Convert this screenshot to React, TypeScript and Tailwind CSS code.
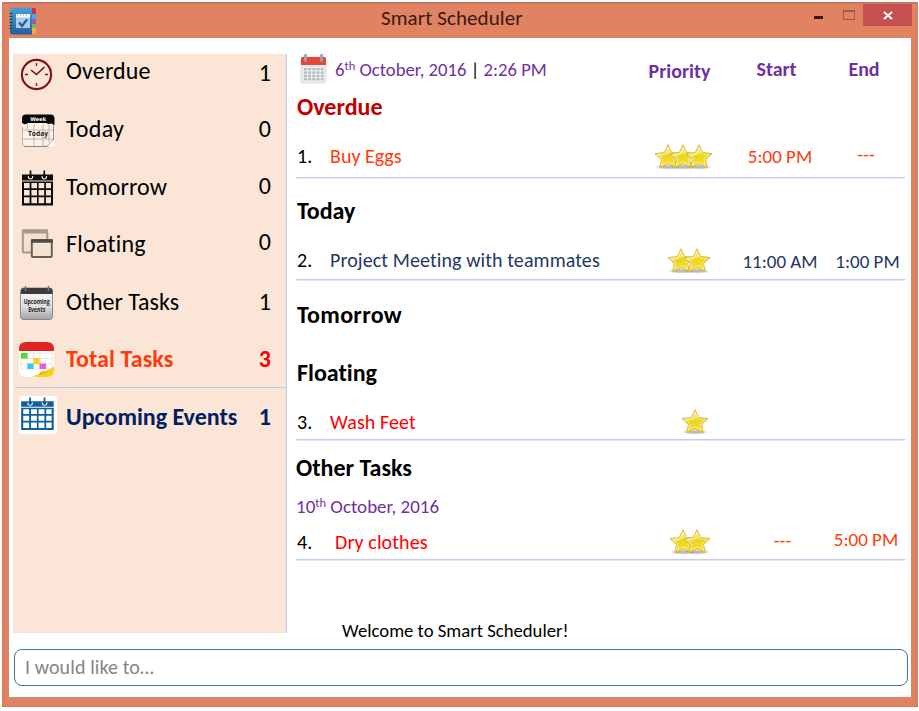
import React from "react";

function NotebookIcon() {
  return (
    <svg width="28" height="28" viewBox="0 0 28 28">
      <defs>
        <linearGradient id="nb" x1="0" y1="0" x2="0" y2="1">
          <stop offset="0" stopColor="#4a9fd0" />
          <stop offset="1" stopColor="#255f98" />
        </linearGradient>
      </defs>
      <rect x="20" y="1" width="7" height="7" rx="2" fill="#d32f4d" />
      <rect x="21" y="7" width="6" height="5" fill="#28b7e6" />
      <rect x="21" y="12" width="6" height="5" fill="#a256b8" />
      <rect x="21" y="17" width="6" height="4" fill="#6fc04a" />
      <rect x="20" y="21" width="7" height="6" rx="2" fill="#f3b13c" />
      <path d="M4 .5h19v27H4a3 3 0 0 1-3-3v-21a3 3 0 0 1 3-3z" fill="url(#nb)" />
      <path d="M.5 6.500h3M.5 9.500h3M.5 12.500h3M.5 15.500h3M.5 18.500h3M.5 21.500h3" stroke="#1b4265" strokeWidth="1" />
      <rect x="7" y="7" width="14" height="14" fill="#a9cde6" />
      <rect x="7" y="7" width="14" height="3.500" fill="#f3f8fc" />
      <path d="M8 8h12" stroke="#6e9dbd" strokeDasharray="1 2" />
      <path d="M10 15.500l3 3.500 5-6.500" fill="none" stroke="#1d5c96" strokeWidth="2.200" />
    </svg>
  );
}

function ClockIcon() {
  return (
    <svg width="38" height="38" viewBox="0 0 38 38">
      <circle cx="17.500" cy="20.500" r="14.600" fill="none" stroke="#8d0b10" strokeWidth="2.100" />
      <path d="M17.500 9v3M17.500 29v3M6 20.500h3M26 20.500h3" stroke="#8d0b10" strokeWidth="1.300" />
      <path d="M12 16l5.500 4.500 8-7.500" fill="none" stroke="#6d0a0d" strokeWidth="1.500" />
    </svg>
  );
}

function TodayIcon() {
  return (
    <svg width="38" height="38" viewBox="0 0 38 38">
      <rect x="3" y="4" width="32.500" height="31" rx="4" fill="#fdf1ea" />
      <path d="M3.500 15v16q0 3.500 3.500 3.500h24M15 12v22M24 12v22M30 11v19M4 18h31M4 27h31M8.500 12v5" fill="none" stroke="#bdb5b0" strokeWidth="1" />
      <path d="M5 34.500h23M34.500 12v16l-7 6.500" fill="none" stroke="#777" strokeWidth=".8" />
      <path d="M28 34.500l7-6.500v4q0 2.500-3 2.500z" fill="#fff" />
      <path d="M3 11V6.500Q3 2.500 7 2.500h24.500q4 0 4 4V13l-3-1.500-3 .5-3-1H9l-3 1.500z" fill="#080808" />
      <path d="M7 12v1M31 12v1" stroke="#fff" strokeWidth="1.500" />
      <text x="19.200" y="9.300" textAnchor="middle" fontFamily="DejaVu Sans" fontWeight="bold" fontSize="5.200" fill="#fff">Week</text>
      <text x="19" y="24" textAnchor="middle" fontFamily="Open Sans" fontWeight="bold" fontSize="7.200" textLength="20" lengthAdjust="spacingAndGlyphs" fill="#222">Today</text>
    </svg>
  );
}

function GridCalendar({ color, box }: { color: string; box?: boolean }) {
  return (
    <svg width="38" height="38" viewBox="0 0 38 38">
      {box && <rect width="38" height="38" rx="4" fill="#fff" />}
      <g transform={box ? "translate(-1 1.5) scale(1.05 .93)" : "translate(0 .5)"}>
        <path d="M3 4h31v6H3z" fill={color} />
        <path d="M9.200 5.500q0 3 2.300 3t2.300-3M23 5.500q0 3 2.300 3t2.300-3" fill="none" stroke="#f2e6dd" strokeWidth="1.100" />
        <path d="M11.500 0v7M25.300 0v7" stroke={color} strokeWidth="1.700" />
        <path d="M3 11h31v24H3z" fill={color} />
        <g fill={box ? "#fff" : "#fae5d7"}>
          <path d="M5 12.500h5.600v5.200H5zM12.400 12.500H18v5.200h-5.600zM19.600 12.500h5.600v5.200h-5.600zM26.900 12.500H32v5.200h-5.100z" />
          <path d="M5 19.500h5.600v5.400H5zM12.400 19.500H18v5.400h-5.600zM19.600 19.500h5.600v5.400h-5.600zM26.900 19.500H32v5.400h-5.100z" />
          <path d="M5 26.800h5.600v6H5zM12.400 26.800H18v6h-5.600zM19.600 26.800h5.600v6h-5.600zM26.900 26.800H32v6h-5.100z" />
        </g>
      </g>
    </svg>
  );
}

function FloatingIcon() {
  return (
    <svg width="38" height="38" viewBox="0 0 38 38">
      <rect x="3.800" y="3.500" width="24.500" height="22" rx="1" fill="#f1e1cd" stroke="#a69a8b" strokeWidth="2" />
      <path d="M3 4.500h26" stroke="#a69a8b" strokeWidth="4" />
      <rect x="12.800" y="13" width="20" height="17" rx="1" fill="#f3e3cf" stroke="#6a6259" strokeWidth="2" />
      <path d="M12 14h22" stroke="#514b45" strokeWidth="3.500" />
    </svg>
  );
}

function EventsIcon() {
  return (
    <svg width="38" height="38" viewBox="0 0 38 38">
      <defs>
        <linearGradient id="ev" x1="0" y1="0" x2="0" y2="1">
          <stop offset="0" stopColor="#fff" />
          <stop offset=".6" stopColor="#dcdcdc" />
          <stop offset="1" stopColor="#a4a4a4" />
        </linearGradient>
      </defs>
      <rect x="1.500" y="3" width="32" height="31.500" rx="3" fill="url(#ev)" stroke="#777" strokeWidth=".8" />
      <path d="M2 9V6q0-3 3-3h25.500q3 0 3 3v3z" fill="#3b3b3b" />
      <path d="M6.500 1v5M29.500 1v5" stroke="#777" strokeWidth="1.600" />
      <text x="17.700" y="18.500" textAnchor="middle" fontFamily="Open Sans" fontWeight="bold" fontSize="6.800" textLength="26" lengthAdjust="spacingAndGlyphs" fill="#222">Upcoming</text>
      <text x="17.700" y="27" textAnchor="middle" fontFamily="Open Sans" fontWeight="bold" fontSize="6.800" textLength="17" lengthAdjust="spacingAndGlyphs" fill="#222">Events</text>
    </svg>
  );
}

function TotalIcon() {
  return (
    <svg width="38" height="38" viewBox="0 0 38 38">
      <rect x="0" y="0" width="35" height="35" rx="6.500" fill="#fff" />
      <path d="M0 9V7q0-7 7-7h21q7 0 7 7v2z" fill="#e02424" />
      <path d="M2 11h31v16H2zM8.500 11v16M14.500 11v16M21 11v16M27 11v16M2 16.500h31M2 22h31" fill="none" stroke="#ddd" strokeWidth=".7" />
      <rect x="2" y="11" width="6.500" height="5.500" fill="#53dc2e" />
      <rect x="14.500" y="16" width="6" height="6" fill="#ffcd13" />
      <rect x="8.500" y="21.500" width="6" height="5.500" fill="#2dcaf4" />
      <rect x="20.500" y="21.500" width="6.500" height="5.500" fill="#f25bce" />
      <path d="M35 24v4q0 7-7 7H13Q27 33 35 24z" fill="#fbd20e" />
      <path d="M12 34.500q8-1 10-5 8 0 13-5-7 9-23 10z" fill="#f2b705" />
    </svg>
  );
}

function RedCalendar() {
  return (
    <svg width="27" height="30" viewBox="0 0 27 30">
      <rect x="1" y="3" width="25" height="26" rx="2" fill="#e9ebee" stroke="#cfd3d7" strokeWidth=".7" />
      <path d="M1 11V5q0-2 2-2h21q2 0 2 2v6z" fill="#e14a36" />
      <path d="M5.500 1v5.500M21.500 1v5.500" stroke="#9aa5ad" strokeWidth="2.800" strokeLinecap="round" />
      <path d="M4 15.200h20M4 18.600h20M4 22h20M4 25.200h20" stroke="#b3bac1" strokeWidth="2.200" strokeDasharray="2.800 1.400" />
    </svg>
  );
}

function Star() {
  return (
    <svg className="shrink-0" width="28" height="26" viewBox="0 0 28 26">
      <defs>
        <linearGradient id="st" x1="0" y1="0" x2=".4" y2="1">
          <stop offset="0" stopColor="#fffbd0" />
          <stop offset=".5" stopColor="#f3e35a" />
          <stop offset=".55" stopColor="#ecd51f" />
          <stop offset="1" stopColor="#f5df2c" />
        </linearGradient>
      </defs>
      <ellipse cx="14" cy="23" rx="12" ry="2.300" fill="#888" opacity=".2" />
      <ellipse cx="14" cy="23" rx="8" ry="1.600" fill="#666" opacity=".35" />
      <path d="M14 .8l3.700 7.800 9.300 1-6.500 5.900 1.900 8.200-8.400-4-8.400 4 1.900-8.200L1 9.600l9.300-1z" fill="url(#st)" stroke="#d6b84a" strokeWidth="1" strokeLinejoin="round" />
      <path d="M14 3.200l3 6.500 7 .8-4.900 4.400 1.400 6.200-6.500-3.200-6.500 3.200 1.400-6.200L4 10.500l7-.8z" fill="none" stroke="#fff9b8" strokeWidth=".8" opacity=".8" />
    </svg>
  );
}

type Item = { label: string; count: string; icon: React.ReactNode; row: string; text: string; num: string };

const items: Item[] = [
  { label: "Overdue", count: "1", icon: <ClockIcon />, row: "h-[58px]", text: "tracking-[0.15px]", num: "mt-[5px]" },
  { label: "Today", count: "0", icon: <TodayIcon />, row: "h-[58px]", text: "tracking-[0.3px]", num: "mt-[3px]" },
  { label: "Tomorrow", count: "0", icon: <GridCalendar color="#0a0a0a" />, row: "h-[57px]", text: "tracking-[0.1px]", num: "mt-[2px]" },
  { label: "Floating", count: "0", icon: <FloatingIcon />, row: "h-[58px]", text: "tracking-[0.25px]", num: "mt-[1px]" },
  { label: "Other Tasks", count: "1", icon: <EventsIcon />, row: "h-[57px]", text: "", num: "mt-[3px]" },
  { label: "Total Tasks", count: "3", icon: <TotalIcon />, row: "h-[46px] border-b border-[#bccbe6]", text: "tracking-[0.1px] font-bold text-[#ff3b0a]", num: "mt-[3px] font-bold text-[#ff0000]" },
  { label: "Upcoming Events", count: "1", icon: <GridCalendar color="#0f5f9c" box />, row: "mt-[8px] h-[40px]", text: "mt-[7px] font-bold text-[#002060]", num: "mt-[7px] font-bold text-[#002060]" },
];

function Sidebar() {
  return (
    <aside className="h-[579px] w-[274px] border-r border-[#b4c7e7] bg-[#fae5d7]">
      {items.map((it) => (
        <div key={it.label} className={`ml-[2px] flex items-start pl-[4px] text-2xl leading-7 ${it.row}`}>
          <div className="w-[47px] shrink-0">{it.icon}</div>
          <div className={`mt-[3px] flex-1 whitespace-nowrap ${it.text}`}>{it.label}</div>
          <div className={`w-[28px] pr-[15px] text-right ${it.num}`}>{it.count}</div>
        </div>
      ))}
    </aside>
  );
}

type TaskProps = { n: string; name: string; stars: number; start?: string; end?: string; row: string; nameCls: string; starCls: string; startCls?: string; endCls?: string };

function Task({ n, name, stars, start, end, row, nameCls, starCls, startCls = "", endCls = "" }: TaskProps) {
  return (
    <div className={`grid w-[609px] grid-cols-[34px_304px_96px_100px_75px] border-b border-[#c0cdee] text-[20px] leading-7 shadow-[0_1px_0_#e2eaf7] ${row}`}>
      <span className="pl-[1px]">{n}</span>
      <span className={nameCls}>{name}</span>
      <span className={`flex items-start justify-center ${starCls}`}>
        {Array.from({ length: stars }, (_, i) => <Star key={i} />)}
      </span>
      <span className={`text-center text-[19px] ${startCls}`}>{start}</span>
      <span className={`text-center text-[19px] whitespace-nowrap ${endCls}`}>{end}</span>
    </div>
  );
}

export default function App() {
  return (
    <div className="h-[711px] w-[919px] overflow-hidden bg-white pl-[2px] pt-[2px] font-['Carlito','Lato',sans-serif] text-black [font-variant-ligatures:none]">
      <div className="h-[705px] w-[916px] border border-[#d57a5d] border-t-2 border-t-[#c9785f] bg-[#e18363]">
        <header className="flex h-[33px] items-start pl-[6px]">
          <div className="mt-[3px]"><NotebookIcon /></div>
          <h1 className="ml-[344px] w-[401px] text-[21px] leading-7 tracking-[0.1px] text-[#3a1a12]">Smart Scheduler</h1>
          <div className="ml-[32px] mt-[12px] h-[3px] w-[9px] bg-[#2f1c16]" />
          <div className="ml-[20px] mt-[6px] h-[10px] w-[12px] border border-t-2 border-[#a25c42]" />
          <div className="ml-[8px] flex h-[22px] w-[49px] items-center justify-center bg-[#c75050]">
            <svg width="10" height="9" viewBox="0 0 10 9"><path d="M1 1l8 7M9 1L1 8" stroke="#fff" strokeWidth="2" /></svg>
          </div>
        </header>
        <div className="ml-[5px] h-[661px] w-[904px] border border-[#cb8a74] bg-white pl-[4px] pt-[16px]">
          <div className="flex h-[595px]">
            <Sidebar />
            <main className="w-[620px] pl-[9px]">
              <div className="grid h-[39px] grid-cols-[338px_96px_100px_75px] text-[20px] leading-7 text-[#7030a0]">
                <div className="flex">
                  <div className="ml-[4px] w-[35px]"><RedCalendar /></div>
                  <div className="mt-[2px] text-[18.700px] whitespace-nowrap">
                    6<sup className="-top-[6px] text-[12.500px] leading-none">th</sup> October, 2016 <span className="text-black">|</span> 2:26 PM
                  </div>
                </div>
                <div className="mt-[3px] -ml-[5px] text-center font-bold">Priority</div>
                <div className="mt-[1px] -ml-[7px] text-center font-bold">Start</div>
                <div className="mt-[1px] -ml-[7px] text-center font-bold">End</div>
              </div>
              <h2 className="pl-[1px] text-2xl font-bold leading-7 text-[#c00000]">Overdue</h2>
              <Task n="1." name="Buy Eggs" stars={3} start="5:00 PM" end="---" row="mt-[21px] h-[36px]" nameCls="text-[#ff3b0a]" starCls="mt-[2px] -space-x-[12.500px] pl-[2px]" startCls="mt-[1px] text-[#ff3b0a]" endCls="-mt-[1px] -ml-[3px] text-[#ff3b0a]" />
              <h2 className="mt-[19px] pl-[1px] text-2xl font-bold leading-7">Today</h2>
              <Task n="2." name="Project Meeting with teammates" stars={2} start="11:00 AM" end="1:00 PM" row="mt-[21px] h-[34px]" nameCls="tracking-[0.1px] text-[#1f3864]" starCls="mt-[2px] -space-x-[12px] pl-[14px]" startCls="mt-[2px] text-[#1f3864]" endCls="mt-[2px] text-[#1f3864]" />
              <h2 className="mt-[21px] pl-[1px] text-2xl font-bold leading-7 tracking-[0.3px]">Tomorrow</h2>
              <h2 className="mt-[30px] pl-[1px] text-2xl font-bold leading-7">Floating</h2>
              <Task n="3." name="Wash Feet" stars={1} row="mt-[21px] h-[32px]" nameCls="tracking-[0.1px] text-[#ff0000]" starCls="mt-[1px] pl-[26px]" />
              <h2 className="mt-[14px] text-2xl font-bold leading-7">Other Tasks</h2>
              <div className="mt-[11px] text-[19px] leading-7 text-[#7030a0]">
                10<sup className="-top-[6px] text-[12.500px] leading-none">th</sup> October, 2016
              </div>
              <Task n="4." name="Dry clothes" stars={2} start="---" end="5:00 PM" row="mt-[7px] h-[32px]" nameCls="pl-[5px] tracking-[0.1px] text-[#ff0000]" starCls="mt-[1px] -space-x-[14px] pl-[15px]" startCls="-mt-[1px] pl-[5px] text-[#ff3b0a]" endCls="-mt-[2px] -ml-[3px] text-[#ff3b0a]" />
              <p className="mt-[57px] pl-[46px] text-[18.700px] leading-7">Welcome to Smart Scheduler!</p>
            </main>
          </div>
          <div className="ml-[1px] h-[37px] w-[894px] rounded-[8px] border border-[#41719c] pl-[10px] text-[20px] leading-[35px] tracking-[0.1px] text-[#858585]">I would like to…</div>
        </div>
      </div>
    </div>
  );
}
